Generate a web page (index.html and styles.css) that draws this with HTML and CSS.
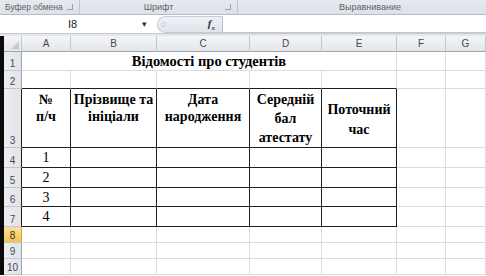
FILE: index.html
```html
<!DOCTYPE html>
<html>
<head>
<meta charset="utf-8">
<link rel="stylesheet" href="styles.css">
</head>
<body>
<div class="ribbon">
  <div class="group g1"><span>Буфер обмена</span><i class="launch"></i></div>
  <div class="group g2"><span>Шрифт</span><i class="launch"></i></div>
  <div class="group g3"><span>Выравнивание</span></div>
</div>
<div class="fbar">
  <div class="namebox"><span class="ref">I8</span><span class="arrow">▾</span></div>
  <div class="pill"><span class="grip"></span><span class="fx">f<sub>x</sub></span></div>
  <div class="input"></div>
</div>
<div class="gap"></div>
<div class="main">
  <div class="edge"></div>
  <div class="sheet">
    <div class="ch corner"><span class="tri"></span></div>
    <div class="ch">A</div><div class="ch">B</div><div class="ch">C</div><div class="ch">D</div><div class="ch">E</div><div class="ch">F</div><div class="ch">G</div>

    <div class="rh">1</div>
    <div class="c title">Відомості про студентів</div>
    <div class="c"></div><div class="c"></div>

    <div class="rh">2</div>
    <div class="c tt"></div><div class="c tt"></div><div class="c tt"></div><div class="c tt"></div><div class="c tt"></div><div class="c"></div><div class="c"></div>

    <div class="rh tl">3</div>
    <div class="c tb hd hd-a">№<br>п/ч</div>
    <div class="c tb hd hd-a">Прізвище та<br>ініціали</div>
    <div class="c tb hd hd-a">Дата<br>народження</div>
    <div class="c tb hd hd-d">Середній<br>бал<br>атестату</div>
    <div class="c tb hd hd-e">Поточний<br>час</div>
    <div class="c"></div><div class="c"></div>

    <div class="rh tl">4</div>
    <div class="c tb num">1</div><div class="c tb"></div><div class="c tb"></div><div class="c tb"></div><div class="c tb"></div><div class="c"></div><div class="c"></div>
    <div class="rh tl">5</div>
    <div class="c tb num">2</div><div class="c tb"></div><div class="c tb"></div><div class="c tb"></div><div class="c tb"></div><div class="c"></div><div class="c"></div>
    <div class="rh tl">6</div>
    <div class="c tb num">3</div><div class="c tb"></div><div class="c tb"></div><div class="c tb"></div><div class="c tb"></div><div class="c"></div><div class="c"></div>
    <div class="rh tl">7</div>
    <div class="c tb num">4</div><div class="c tb"></div><div class="c tb"></div><div class="c tb"></div><div class="c tb"></div><div class="c"></div><div class="c"></div>

    <div class="rh sel">8</div>
    <div class="c"></div><div class="c"></div><div class="c"></div><div class="c"></div><div class="c"></div><div class="c"></div><div class="c"></div>
    <div class="rh">9</div>
    <div class="c"></div><div class="c"></div><div class="c"></div><div class="c"></div><div class="c"></div><div class="c"></div><div class="c"></div>
    <div class="rh">10</div>
    <div class="c"></div><div class="c"></div><div class="c"></div><div class="c"></div><div class="c"></div><div class="c"></div><div class="c"></div>
  </div>
</div>
</body>
</html>
```
FILE: styles.css
```css
* { box-sizing: border-box; }
html, body { margin: 0; padding: 0; }
body {
  width: 486px;
  height: 276px;
  overflow: hidden;
  background: #ffffff;
  font-family: "Liberation Sans", Arial, sans-serif;
}
.ribbon {
  height: 15px;
  display: flex;
  background: linear-gradient(#e6e9ee, #dde2e8);
  border-bottom: 1px solid #b6bcc6;
}
.group {
  position: relative;
  display: flex;
  align-items: center;
  justify-content: center;
  font-size: 9px;
  color: #5b5f66;
  border-right: 1px solid #c3c8d0;
}
.g1 { width: 80px; justify-content: flex-start; padding-left: 5px; font-size: 8.5px; }
.g2 { width: 158px; }
.g3 { flex: 1; border-right: none; padding-left: 16px; }
.launch {
  position: absolute;
  right: 6px;
  top: 4px;
  width: 6px;
  height: 6px;
  border-right: 1px solid #9aa1ab;
  border-bottom: 1px solid #9aa1ab;
}
.fbar {
  height: 18px;
  display: flex;
  background: #ffffff;
}
.namebox {
  width: 155px;
  display: flex;
  align-items: center;
  padding-left: 68px;
  font-size: 11px;
  color: #222;
}
.ref { width: 74px; }
.arrow { font-size: 9px; color: #333; }
.pill {
  width: 66px;
  margin-left: 2px;
  margin-top: 1px;
  height: 17px;
  border-radius: 9px 0 0 9px;
  background: linear-gradient(#eef1f5, #dfe4ea);
  border: 1px solid #c6ccd4;
  border-right: 1px solid #b9bfc8;
  display: flex;
  align-items: center;
  padding-left: 3px;
}
.grip {
  width: 5px;
  height: 5px;
  border-radius: 50%;
  border: 1px solid #c9ced5;
}
.fx {
  margin-left: auto;
  margin-right: 7px;
  font-family: "Liberation Serif", serif;
  font-style: italic;
  font-weight: bold;
  font-size: 11px;
  color: #333;
}
.fx sub { font-size: 7px; }
.input { flex: 1; background: #fff; border-bottom: 1px solid #c3c8d0; }
.gap {
  height: 3px;
  background: #e4e7eb;
  border-top: 1px solid #c5cad1;
}
.main { display: flex; }
.edge { width: 4px; background: #0a0a0a; }
.sheet {
  flex: 1;
  display: grid;
  grid-template-columns: 18px 49px 86px 93px 72px 75px 49px 1fr;
  grid-template-rows: 16px 19px 18px 59px 20px 20px 19px 20px 16px 16px 16px;
}
.ch {
  background: linear-gradient(#f4f5f7, #e3e6ea);
  border-right: 1px solid #c2c7ce;
  border-bottom: 1px solid #9ea5b0;
  font-size: 10px;
  color: #464a50;
  display: flex;
  align-items: center;
  justify-content: center;
}
.corner { position: relative; }
.tri {
  position: absolute;
  right: 2px;
  bottom: 2px;
  width: 0;
  height: 0;
  border-left: 8px solid transparent;
  border-bottom: 8px solid #c5cad1;
}
.rh {
  background: linear-gradient(90deg, #eceef1, #e1e4e8);
  border-right: 1px solid #9ea5b0;
  border-bottom: 1px solid #c2c7ce;
  font-size: 10px;
  color: #464a50;
  display: flex;
  align-items: flex-end;
  justify-content: center;
  padding-bottom: 1px;
}
.rh.tl { border-right-color: #1e1e1e; }
.rh.sel {
  background: linear-gradient(#fbe29a, #f3c24f);
  color: #3a3320;
  border-right-color: #d9a43a;
}
.c {
  border-right: 1px solid #dcdcdc;
  border-bottom: 1px solid #dcdcdc;
  font-family: "Liberation Serif", "Times New Roman", serif;
  color: #000;
}
.title {
  grid-column: span 5;
  font-weight: bold;
  font-size: 14.5px;
  display: flex;
  align-items: center;
  justify-content: center;
  padding-top: 1px;
}
.c.tt { border-bottom-color: #1e1e1e; }
.c.tb { border-right-color: #1e1e1e; border-bottom-color: #1e1e1e; }
.hd {
  font-weight: bold;
  font-size: 14px;
  text-align: center;
  white-space: nowrap;
  display: flex;
  flex-direction: column;
  align-items: center;
}
.hd-a { line-height: 17px; padding-top: 2px; }
.hd-d { line-height: 19px; padding-top: 1px; }
.hd-e { line-height: 20px; padding-top: 11px; }
.num {
  font-size: 14px;
  display: flex;
  align-items: center;
  justify-content: center;
  padding-top: 1px;
}
```
